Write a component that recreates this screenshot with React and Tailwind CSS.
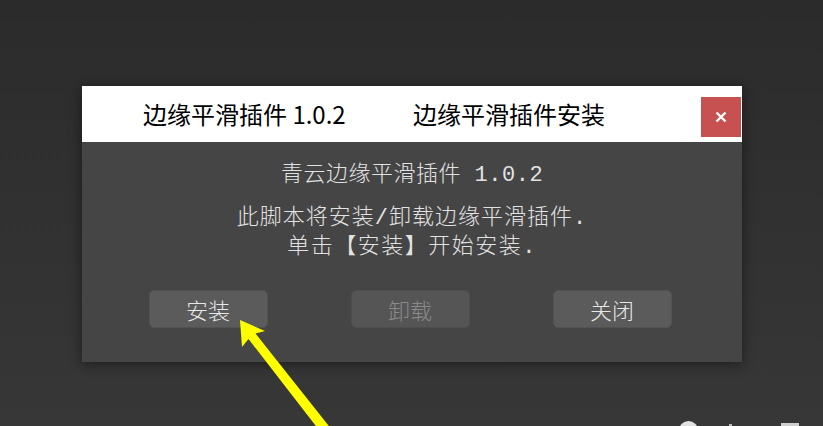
import React from 'react';

const bodyFont = { fontFamily: '"Liberation Mono", "Noto Sans CJK SC", monospace' };

const DialogButton = ({ children, disabled }) => (
  <button
    disabled={disabled}
    className={
      disabled
        ? 'w-[119px] h-[38px] rounded-[5px] bg-[#555555] border border-[#4e4e4e] text-[22px] leading-none font-light text-[#8a8a8a]'
        : 'w-[119px] h-[38px] rounded-[5px] bg-[#5b5b5b] border border-[#525252] text-[22px] leading-none font-light text-[#e8e8e8]'
    }
    style={{ fontFamily: '"Noto Sans CJK SC", sans-serif' }}
  >
    {children}
  </button>
);

const App = () => {
  return (
    <div className="relative w-[823px] h-[426px] overflow-hidden bg-gradient-to-b from-[#2b2b2b] to-[#373737] pt-[86px] pl-[82px]">
      {/* Installer dialog */}
      <div className="w-[660px] h-[276px] flex flex-col shadow-[0_2px_12px_rgba(0,0,0,0.45)]">
        {/* Title bar */}
        <div
          className="h-[56px] bg-white flex items-start pl-[61px] text-black"
          style={{ fontFamily: '"Noto Sans CJK SC", sans-serif' }}
        >
          <span className="text-[24px] leading-[56px] w-[270px]">边缘平滑插件 1.0.2</span>
          <span className="text-[24px] leading-[56px]">边缘平滑插件安装</span>
          <div className="ml-auto mr-px mt-[11px] w-[40px] h-[40px] bg-[#c75050] flex items-center justify-center">
            <svg width="12" height="12" viewBox="0 0 12 12">
              <path d="M1.5 1.5 L10.5 10.5 M10.5 1.5 L1.5 10.5" stroke="#ffffff" strokeWidth="2.4" />
            </svg>
          </div>
        </div>

        {/* Body */}
        <div className="flex-1 bg-[#454545] flex flex-col items-center pt-[20px] text-[#e2e2e2] font-light" style={bodyFont}>
          <p className="text-[22px] leading-[28px] tracking-[0.5px]">青云边缘平滑插件 1.0.2</p>
          <p className="mt-[14px] text-[22px] leading-[29px] tracking-[1px]">此脚本将安装/卸载边缘平滑插件.</p>
          <p className="text-[22px] leading-[29px] tracking-[1.5px]">单击【安装】开始安装.</p>
          <div className="mt-[28px] flex gap-[83px] -ml-[4px]">
            <DialogButton>安装</DialogButton>
            <DialogButton disabled>卸载</DialogButton>
            <DialogButton>关闭</DialogButton>
          </div>
        </div>
      </div>

      {/* Yellow annotation arrow */}
      <svg className="absolute left-0 top-0" width="823" height="426" viewBox="0 0 823 426">
        <polygon
          points="240,320 265,331 255.5,333.5 332,430 319,430 248.5,339 242,347"
          fill="#ffff00"
        />
      </svg>

      {/* Watermark, cut off at the bottom edge */}
      <div className="absolute left-[679px] top-[421px] w-[19px] h-[19px] rounded-full bg-[#e2e2e2]" />
      <div className="absolute left-[729px] top-[424px] w-[3px] h-[3px] bg-[#bdbdbd]" />
      <div className="absolute left-[781px] top-[423px] w-[18px] h-[3px] bg-[#cfcfcf]" />
    </div>
  );
};

export default App;
